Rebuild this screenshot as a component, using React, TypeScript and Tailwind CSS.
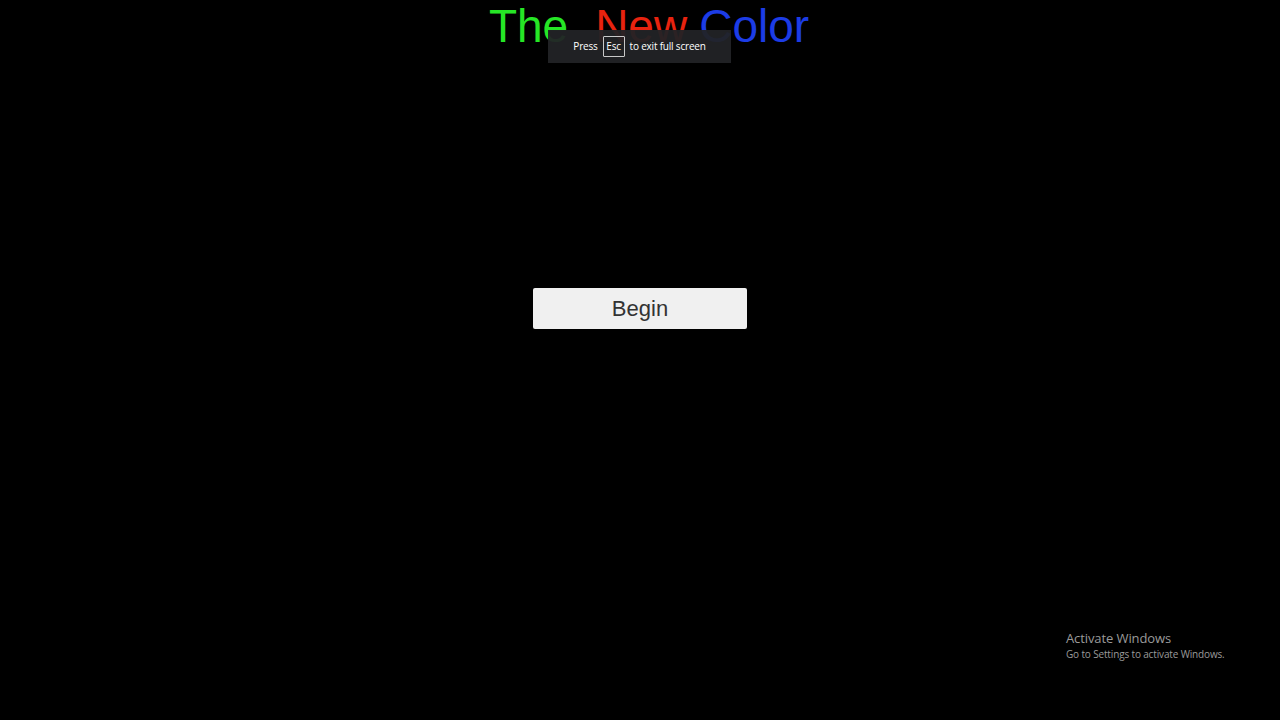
import React from 'react';

const sans = { fontFamily: '"Liberation Sans", Arial, sans-serif' };
const ui = { fontFamily: '"Open Sans", "Noto Sans", sans-serif' };

export default function App() {
  return (
    <div className="relative w-[1280px] h-[720px] bg-black overflow-hidden">
      {/* Title */}
      <div className="flex justify-center pl-[18px]" style={sans}>
        <h1 className="text-[46px] leading-[52px] h-[52px] whitespace-pre font-normal">
          <span className="text-[#26e626]">The</span>
          <span className="inline-block w-[27px]"></span>
          <span className="text-[#e8230f]">New</span>
          <span className="inline-block w-[12px]"></span>
          <span className="text-[#1c3ce6]">Color</span>
        </h1>
      </div>

      {/* Start button */}
      <div className="flex justify-center mt-[236px]">
        <button
          className="w-[214px] h-[41px] bg-[#f0f0f0] rounded-[2px] text-[22px] text-[#333333] flex items-center justify-center"
          style={sans}
        >
          Begin
        </button>
      </div>

      {/* Fullscreen toast */}
      <div
        className="absolute left-[548px] top-[30px] w-[183px] h-[33px] bg-[#222326]/95 flex items-center justify-center gap-[5px] text-[10px] tracking-[-0.2px] text-white"
        style={ui}
      >
        <span>Press</span>
        <span className="border border-[#c8c8c8] w-[22px] h-[21px] flex items-center justify-center rounded-[1px]">Esc</span>
        <span>to exit full screen</span>
      </div>

      {/* Windows watermark */}
      <div className="absolute left-[1066px] top-[629px] text-[#9a9a9a]" style={ui}>
        <div className="text-[13px] leading-[18px] tracking-[-0.1px]">Activate Windows</div>
        <div className="text-[10px] leading-[14px] tracking-[-0.15px]">Go to Settings to activate Windows.</div>
      </div>
    </div>
  );
}
